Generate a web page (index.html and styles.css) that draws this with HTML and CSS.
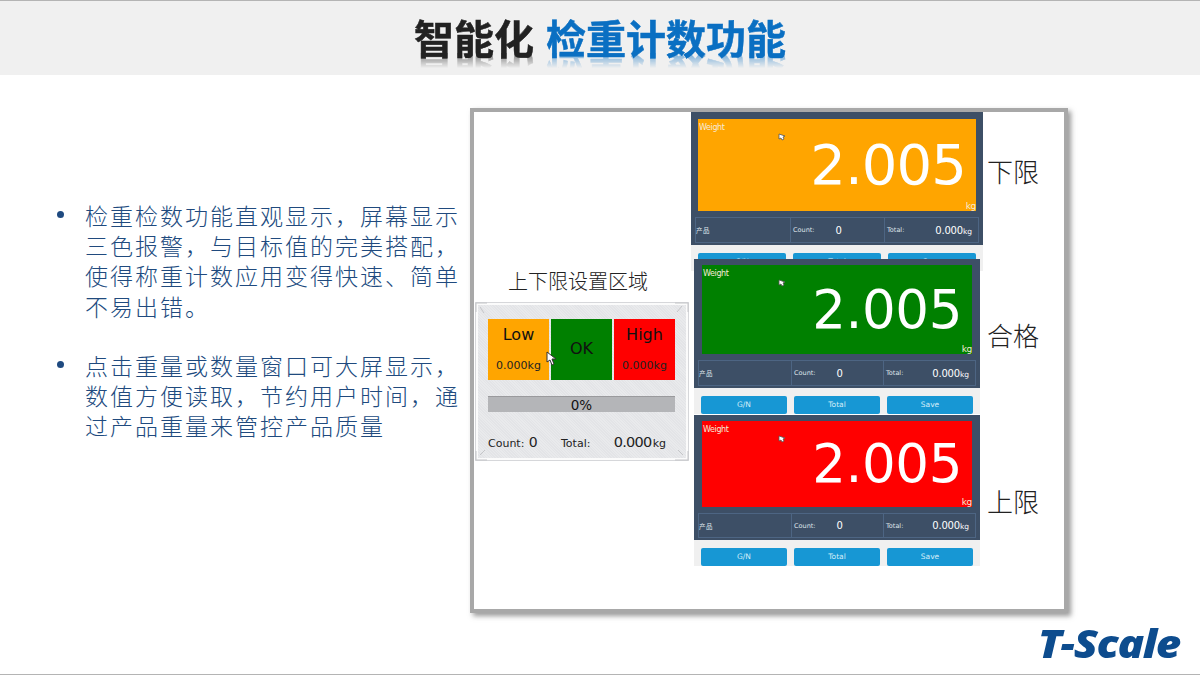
FILE: index.html
```html
<!DOCTYPE html>
<html lang="zh-CN">
<head>
<meta charset="utf-8">
<title>智能化 检重计数功能</title>
<link rel="stylesheet" href="styles.css">
</head>
<body>
<div class="slide">
  <header class="header">
    <h1 class="title">智能化 <span class="title-accent">检重计数功能</span></h1>
  </header>
  <main class="main">
    <section class="copy">
      <ul class="points">
        <li class="point"><span class="point-text">检重检数功能直观显示，屏幕显示三色报警，与目标值的完美搭配，使得称重计数应用变得快速、简单不易出错。</span></li>
        <li class="point"><span class="point-text">点击重量或数量窗口可大屏显示，数值方便读取，节约用户时间，通过产品重量来管控产品质量</span></li>
      </ul>
    </section>
    <section class="panel">
      <div class="zone-label">上下限设置区域</div>
      <div class="widget">
        <svg class="widget-corners" width="214" height="159" viewBox="0 0 214 159"><path d="M1 1l11 0M1 1l0 9M5 5l4 6M213 1l-13 0M213 1l0 9M207 4l-5 6M1 158l11 0M1 158l0-9M5 153l5-5M213 158l-13 0M213 158l0-9M208 153l-5-5" fill="none" stroke="#c4c5c8" stroke-width="1"/></svg>
        <div class="limits">
          <div class="limit limit-low"><span class="limit-name">Low</span><span class="limit-value">0.000kg</span></div>
          <div class="limit limit-ok"><span class="limit-name">OK</span></div>
          <div class="limit limit-high"><span class="limit-name">High</span><span class="limit-value">0.000kg</span></div>
        </div>
        <div class="progress">0%</div>
        <div class="totals">
          <span class="totals-count"><span class="totals-label">Count:</span> 0</span>
          <span class="totals-label">Total:</span>
          <span class="totals-sum">0.000<small class="totals-unit">kg</small></span>
        </div>
        <svg class="cursor cursor-widget" width="11" height="15" viewBox="0 0 11 15"><path d="M1 1l0 10 3-2 2 5 2-1-2-5 4 0z" fill="#fff" stroke="#333" stroke-width="1"/></svg>
      </div>

      <div class="screen screen-low">
        <div class="device device-low">
          <div class="display display-orange">
            <span class="display-label">Weight</span>
            <svg class="cursor cursor-screen" width="7" height="8" viewBox="0 0 7 8"><path d="M1 1l0 5 2-1 1 2 2-1-1-2 2-1z" fill="#fff" stroke="#555" stroke-width=".8"/></svg>
            <span class="display-value">2.005</span>
            <span class="display-unit">kg</span>
          </div>
          <div class="stats">
            <div class="stat"><span class="stat-label">产品</span></div>
            <div class="stat"><span class="stat-label">Count:</span><span class="stat-count">0</span></div>
            <div class="stat"><span class="stat-label">Total:</span><span class="stat-total">0.000<small class="stat-unit">kg</small></span></div>
          </div>
        </div>
        <div class="actions"><button class="action">G/N</button><button class="action">Total</button><button class="action">Save</button></div>
      </div>

      <div class="screen screen-ok">
        <div class="device device-ok">
          <div class="display display-green">
            <span class="display-label">Weight</span>
            <svg class="cursor cursor-screen" width="7" height="8" viewBox="0 0 7 8"><path d="M1 1l0 5 2-1 1 2 2-1-1-2 2-1z" fill="#fff" stroke="#555" stroke-width=".8"/></svg>
            <span class="display-value">2.005</span>
            <span class="display-unit">kg</span>
          </div>
          <div class="stats">
            <div class="stat"><span class="stat-label">产品</span></div>
            <div class="stat"><span class="stat-label">Count:</span><span class="stat-count">0</span></div>
            <div class="stat"><span class="stat-label">Total:</span><span class="stat-total">0.000<small class="stat-unit">kg</small></span></div>
          </div>
        </div>
        <div class="actions"><button class="action">G/N</button><button class="action">Total</button><button class="action">Save</button></div>
      </div>

      <div class="screen screen-high">
        <div class="device device-high">
          <div class="display display-red">
            <span class="display-label">Weight</span>
            <svg class="cursor cursor-screen" width="7" height="8" viewBox="0 0 7 8"><path d="M1 1l0 5 2-1 1 2 2-1-1-2 2-1z" fill="#fff" stroke="#555" stroke-width=".8"/></svg>
            <span class="display-value">2.005</span>
            <span class="display-unit">kg</span>
          </div>
          <div class="stats">
            <div class="stat"><span class="stat-label">产品</span></div>
            <div class="stat"><span class="stat-label">Count:</span><span class="stat-count">0</span></div>
            <div class="stat"><span class="stat-label">Total:</span><span class="stat-total">0.000<small class="stat-unit">kg</small></span></div>
          </div>
        </div>
        <div class="actions"><button class="action">G/N</button><button class="action">Total</button><button class="action">Save</button></div>
      </div>

      <div class="state-label state-low">下限</div>
      <div class="state-label state-ok">合格</div>
      <div class="state-label state-high">上限</div>
    </section>
  </main>
  <div class="logo">T-Scale</div>
</div>
</body>
</html>
```
FILE: styles.css
```css
* { box-sizing: border-box; }
html, body { margin: 0; padding: 0; }
body { background: #fff; font-family: "Noto Sans CJK SC", sans-serif; }

.slide {
  position: relative;
  width: 1200px;
  height: 675px;
  overflow: hidden;
  background: #fff;
  border-top: 1px solid #b4b4b4;
  border-bottom: 1px solid #b4b4b4;
  display: flex;
  flex-direction: column;
}

.header {
  height: 74px;
  flex: none;
  background: #f0f0f0;
  display: flex;
  justify-content: center;
  padding-top: 16px;
  overflow: hidden;
}
.title {
  margin: 0;
  height: 40px;
  font: 700 40px/40px "Noto Sans CJK SC", sans-serif;
  -webkit-text-stroke: .5px currentColor;
  word-spacing: 3px;
  color: #222;
  white-space: pre;
  -webkit-box-reflect: below -4px linear-gradient(transparent 62%, rgba(255,255,255,.55));
}
.title-accent { color: #0a6fc2; }

.main { flex: 1; display: flex; min-height: 0; }
.copy { width: 470px; flex: none; padding-top: 125px; }
.points { margin: 0; padding: 0 0 0 57px; list-style: none; display: flex; flex-direction: column; gap: 29px; }
.point { display: flex; align-items: flex-start; }
.point::before {
  content: "";
  flex: none;
  width: 7px;
  height: 7px;
  margin: 11px 21px 0 0;
  border-radius: 50%;
  background: #1f4a80;
}
.point-text {
  width: 376px;
  font-size: 23px;
  font-weight: 300;
  line-height: 30.2px;
  letter-spacing: 2px;
  color: #204a7e;
}

.panel {
  position: relative;
  flex: none;
  width: 598px;
  height: 505px;
  margin-top: 33px;
  background: #fff;
  border: 4px solid #a8a8a8;
  box-shadow: 3px 3px 5px rgba(120,120,120,.75);
}

.zone-label {
  position: absolute;
  left: 34px;
  top: 156px;
  font-size: 20px;
  font-weight: 300;
  line-height: 26px;
  color: #222;
  white-space: nowrap;
}

.widget {
  position: absolute;
  left: 1px;
  top: 190px;
  width: 214px;
  height: 159px;
  padding: 14px 11px 0 10px;
  border: 3px solid #fbfbfb;
  outline: 1px solid #d6d7da;
  outline-offset: -1px;
  background: repeating-linear-gradient(45deg, #e3e4e7 0 1px, #e9eaec 1px 2px);
  font-family: "DejaVu Sans", sans-serif;
  color: #111;
  display: flex;
  flex-direction: column;
}
.widget-corners { position: absolute; left: -3px; top: -3px; }
.limits { display: flex; gap: 2px; height: 61px; }
.limit {
  flex: 1;
  display: flex;
  flex-direction: column;
  align-items: center;
  justify-content: center;
  gap: 14px;
}
.limit-low { background: #ffa500; }
.limit-ok { background: #008000; }
.limit-high { background: #ff0000; }
.limit-name { font-size: 16px; line-height: 20px; }
.limit-ok .limit-name { margin-top: -2px; }
.limit-value { font-size: 11px; line-height: 14px; margin-bottom: 2px; color: #222; }
.progress {
  margin-top: 16px;
  height: 16px;
  background: #b4b5b8;
  border-top: 1px solid #9a9a9d;
  font-size: 13.5px;
  line-height: 16px;
  text-align: center;
}
.totals {
  margin-top: 21px;
  display: flex;
  align-items: baseline;
  color: #222;
  font-size: 14px;
  line-height: 18px;
}
.totals-count { width: 73px; }
.totals-label { font-size: 11px; }
.totals-sum { margin: 0 9px 0 auto; font-size: 14.5px; letter-spacing: -.7px; white-space: nowrap; }
.totals-unit { font-size: 11px; letter-spacing: 0; margin-left: 1px; }

.cursor { position: absolute; }
.cursor-widget { left: 68px; top: 46px; }
.cursor-screen { left: 80px; top: 14px; }

.screen { position: absolute; display: flex; flex-direction: column; }
.screen-low { left: 217px; top: 0; width: 292px; }
.screen-ok { left: 220px; top: 147px; width: 286px; }
.screen-high { left: 220px; top: 303px; width: 286px; }

.device {
  background: #3d4f66;
  padding: 6px 4px 0;
  display: flex;
  flex-direction: column;
  gap: 6px;
}
.device-low { height: 133px; padding-top: 7px; }
.device-ok { height: 129px; }
.device-high { height: 125px; }
.device-ok .display, .device-high .display { margin: 0 4px; }
.device-ok .display-value, .device-high .display-value { font-size: 53px; letter-spacing: -.4px; }
.device-ok .cursor-screen, .device-high .cursor-screen { left: 76px; }

.display {
  position: relative;
  flex: 1;
  margin: 0 3px;
  display: flex;
  align-items: center;
  justify-content: flex-end;
  padding-right: 10px;
  color: #fff;
  font-family: "DejaVu Sans", sans-serif;
}
.display-orange { background: #ffa500; }
.display-green { background: #008000; }
.display-red { background: #ff0000; }
.display-label {
  position: absolute;
  left: 1px;
  top: 4px;
  font: 8px/10px "DejaVu Sans", sans-serif;
  letter-spacing: -.4px;
  color: #f6ead6;
}
.display-value { font-size: 56px; line-height: 60px; letter-spacing: -.9px; }
.display-unit {
  position: absolute;
  right: 0;
  bottom: 0;
  font: 9px/10px "DejaVu Sans", sans-serif;
  letter-spacing: -.3px;
  color: #f6ead6;
}

.stats {
  flex: none;
  height: 26px;
  margin-bottom: 2px;
  display: grid;
  grid-template-columns: repeat(3, 1fr);
  border: 1px solid #4d6583;
  color: #dfe4ea;
  font-family: "DejaVu Sans", sans-serif;
}
.device-high .stats { height: 25px; }
.stat {
  display: flex;
  align-items: center;
  padding: 0 6px 0 2px;
  border-left: 1px solid #4d6583;
  white-space: nowrap;
}
.stat:first-child { border-left: 0; padding-left: 0; }
.stat-label { font-size: 6.5px; }
.stat-count { margin-left: 21px; font-size: 10px; color: #fff; }
.stat-total { margin-left: auto; font-size: 10px; letter-spacing: -.2px; color: #fff; }
.stat-unit { font-size: 7.5px; letter-spacing: 0; }

.actions {
  height: 26px;
  padding: 8px 7px 0;
  background: #f0f0f0;
  display: flex;
  gap: 7px;
}
.action {
  flex: 1;
  height: 18px;
  padding: 0;
  border: 0;
  border-radius: 2px;
  background: #1797d4;
  color: #d5edf8;
  font: 7.5px/18px "DejaVu Sans", sans-serif;
}

.state-label {
  position: absolute;
  left: 513px;
  font-size: 26px;
  font-weight: 300;
  line-height: 32px;
  color: #222;
  white-space: nowrap;
}
.state-low { top: 43px; }
.state-ok { top: 207px; }
.state-high { top: 373px; }

.logo {
  position: absolute;
  right: 20px;
  bottom: 8px;
  font: italic 800 39px/46px "Open Sans", sans-serif;
  letter-spacing: -1.2px;
  color: #0d4c8e;
  transform: scaleX(1.13);
  transform-origin: right center;
}
```
